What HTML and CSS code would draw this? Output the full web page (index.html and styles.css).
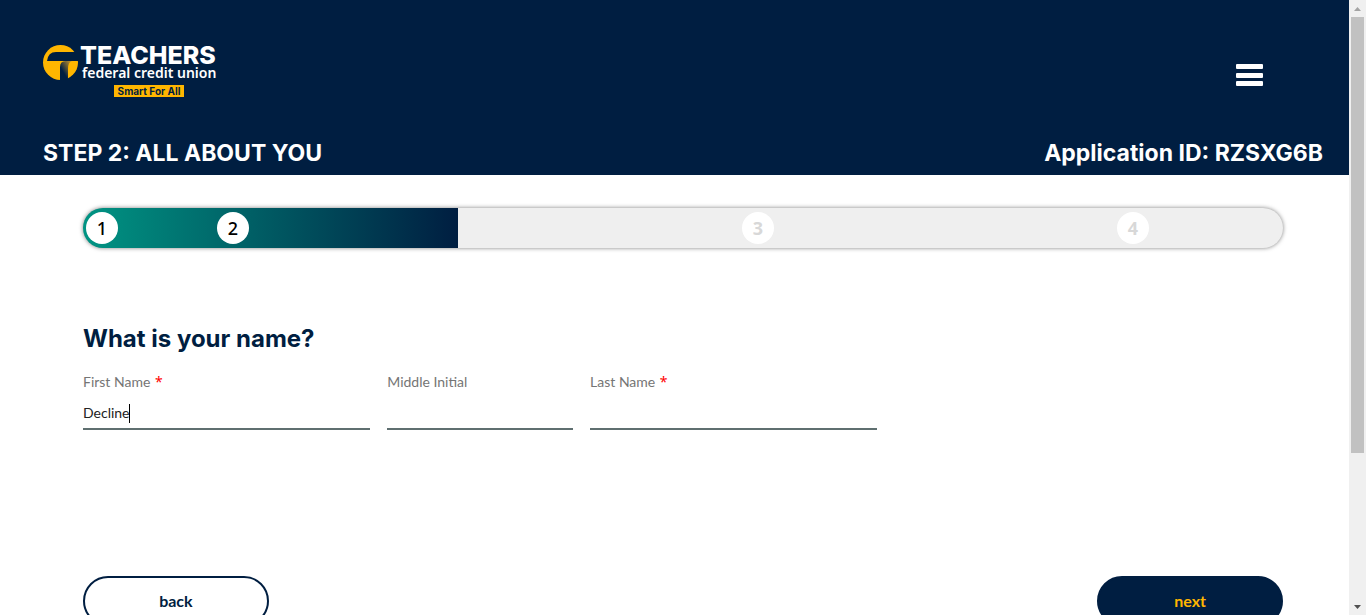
FILE: index.html
```html
<!DOCTYPE html>
<html lang="en">
<head>
<meta charset="utf-8">
<meta name="viewport" content="width=device-width, initial-scale=1">
<title>Teachers Federal Credit Union - All About You</title>
<link rel="stylesheet" href="styles.css">
</head>
<body>
<div class="page">
  <header class="header">
    <div class="header-top">
      <svg class="logo" viewBox="0 -8 180 64" role="img" aria-label="Teachers federal credit union">
        <defs>
          <linearGradient id="stem" x1="0.3" y1="0.6" x2="0.9" y2="0">
            <stop offset="0" stop-color="#001e41"/>
            <stop offset="1" stop-color="#c9962a"/>
          </linearGradient>
        </defs>
        <circle cx="17.500" cy="19.500" r="17.500" fill="#ffb600"/>
        <path d="M4 18Q5 9 13 9H36V18Z" fill="#001e41"/>
        <path d="M17 37.500V24Q17 18 23 18H29Q25 19 25 26V37.500Z" fill="url(#stem)"/>
        <text class="logo-name" x="37" y="21">TEACHERS</text>
        <text class="logo-sub" x="39" y="35">federal credit union</text>
        <rect x="71" y="42" width="70" height="12" fill="#ffb600"/>
        <text class="logo-tag" x="106" y="52">Smart For All</text>
      </svg>
      <button class="menu" type="button" aria-label="Menu">
        <svg viewBox="0 0 27 22" width="27" height="22" fill="#fff"><rect width="27" height="5" rx="1"/><rect y="9" width="27" height="5" rx="1"/><rect y="17" width="27" height="5" rx="1"/></svg>
      </button>
    </div>
    <div class="header-titles">
      <h1 class="title">STEP 2: ALL ABOUT YOU</h1>
      <p class="title">Application ID: RZSXG6B</p>
    </div>
  </header>
  <main class="content">
    <ol class="progress">
      <li class="step step-1">1</li>
      <li class="step step-2">2</li>
      <li class="step step-3 pending">3</li>
      <li class="step step-4 pending">4</li>
    </ol>
    <form class="form">
      <h2 class="question">What is your name?</h2>
      <div class="grid">
        <div class="field wide">
          <label for="first">First Name <span class="required">*</span></label>
          <input id="first" type="text" value="Decline">
          <span class="caret"></span>
        </div>
        <div class="field">
          <label for="middle">Middle Initial</label>
          <input id="middle" type="text">
        </div>
        <div class="field wide">
          <label for="last">Last Name <span class="required">*</span></label>
          <input id="last" type="text">
        </div>
      </div>
      <div class="grid actions">
        <button class="button back" type="button">back</button>
        <button class="button next" type="submit">next</button>
      </div>
    </form>
  </main>
</div>
<div class="scrollbar" aria-hidden="true">
  <svg class="arrow up" viewBox="0 0 17 17"><path d="M5 11L8.500 7L12 11Z"/></svg>
  <div class="track"><div class="thumb"></div></div>
  <svg class="arrow" viewBox="0 0 17 17"><path d="M5 7H12L8.500 11Z"/></svg>
</div>
</body>
</html>
```

FILE: styles.css
```css
* { box-sizing: border-box; }

body {
  display: flex;
  height: 100vh;
  margin: 0;
  overflow: hidden;
  background: #fff;
  font-family: Lato, "Noto Sans", sans-serif;
}

.page { flex: 1; min-width: 0; overflow: hidden; }

.header {
  padding: 35px 26px 7px 43px;
  background: #001e41;
  color: #fff;
}

.header-top {
  display: flex;
  align-items: center;
  justify-content: space-between;
  padding-right: 60px;
}

.logo { display: block; width: 180px; height: 64px; overflow: visible; font-family: Inter, sans-serif; }
.logo-name { font-size: 25px; font-weight: 800; fill: #fff; }
.logo-sub { font-family: "Noto Sans", sans-serif; font-size: 14px; font-weight: 600; fill: #fff; }
.logo-tag { font-size: 10px; font-weight: 700; fill: #001e41; text-anchor: middle; }

.menu { display: block; padding: 16px 0 0; border: 0; background: none; }
.menu svg { display: block; }

.header-titles {
  display: flex;
  justify-content: space-between;
  margin-top: 39px;
}

.title {
  margin: 0;
  font: 700 23px/30px Inter, sans-serif;
}

.content { padding: 33px 66px 0 83px; }

.progress {
  position: relative;
  height: 40px;
  margin: 0;
  padding: 0;
  border-radius: 20px;
  background: linear-gradient(90deg, #009483, #001e41) 0 0 / 31.25% 100% no-repeat #efefef;
  box-shadow: 0 0 4px rgba(0, 0, 0, 0.5);
  list-style: none;
}

.step {
  position: absolute;
  top: 4px;
  width: 32px;
  height: 32px;
  margin-left: -16px;
  border-radius: 50%;
  background: #fff;
  color: #000;
  font: 500 18px/32px "Noto Sans", sans-serif;
  text-align: center;
}

.step-1 { left: 19px; }
.step-2 { left: 12.5%; }
.step-3 { left: 56.25%; }
.step-4 { left: 87.5%; }
.pending { color: #d8d8d8; font-weight: 700; }

.question {
  margin: 76px 0 0;
  color: #001e41;
  font: 700 24px/30px Inter, sans-serif;
}

.grid {
  display: grid;
  grid-template-columns: repeat(12, 1fr);
  column-gap: 17px;
}

.field {
  position: relative;
  grid-column: span 2;
  padding-top: 18px;
}

.wide { grid-column: span 3; }

.field label {
  display: block;
  color: #757575;
  font-size: 14px;
  line-height: 20px;
}

.required { margin-left: 1px; color: #f00; font-family: "Noto Sans", sans-serif; line-height: 1; }

.field input {
  display: block;
  width: 100%;
  height: 38px;
  padding: 4px 0 0;
  border: 0;
  border-bottom: 2px solid #5f6f70;
  outline: 0;
  background: none;
  color: #222;
  font: inherit;
  font-size: 14px;
}

.caret {
  position: absolute;
  bottom: 7px;
  left: 46px;
  width: 1px;
  height: 19px;
  background: #000;
}

.actions { margin-top: 146px; }

.button {
  grid-column: span 2;
  height: 50px;
  border: 2px solid #001e41;
  border-radius: 25px;
  background: #fff;
  color: #001e41;
  font: 700 16px/20px Lato, sans-serif;
}

.next {
  grid-column: 11 / span 2;
  background: #001e41;
  color: #ffb600;
}

.scrollbar {
  display: flex;
  flex-direction: column;
  width: 17px;
  background: #f0f0f0;
}

.arrow { display: block; width: 17px; height: 17px; fill: #505050; }
.up { fill: #a3a3a3; }
.track { flex: 1; padding: 0 2px; }
.thumb { height: 75%; background: #c1c1c1; }
```
